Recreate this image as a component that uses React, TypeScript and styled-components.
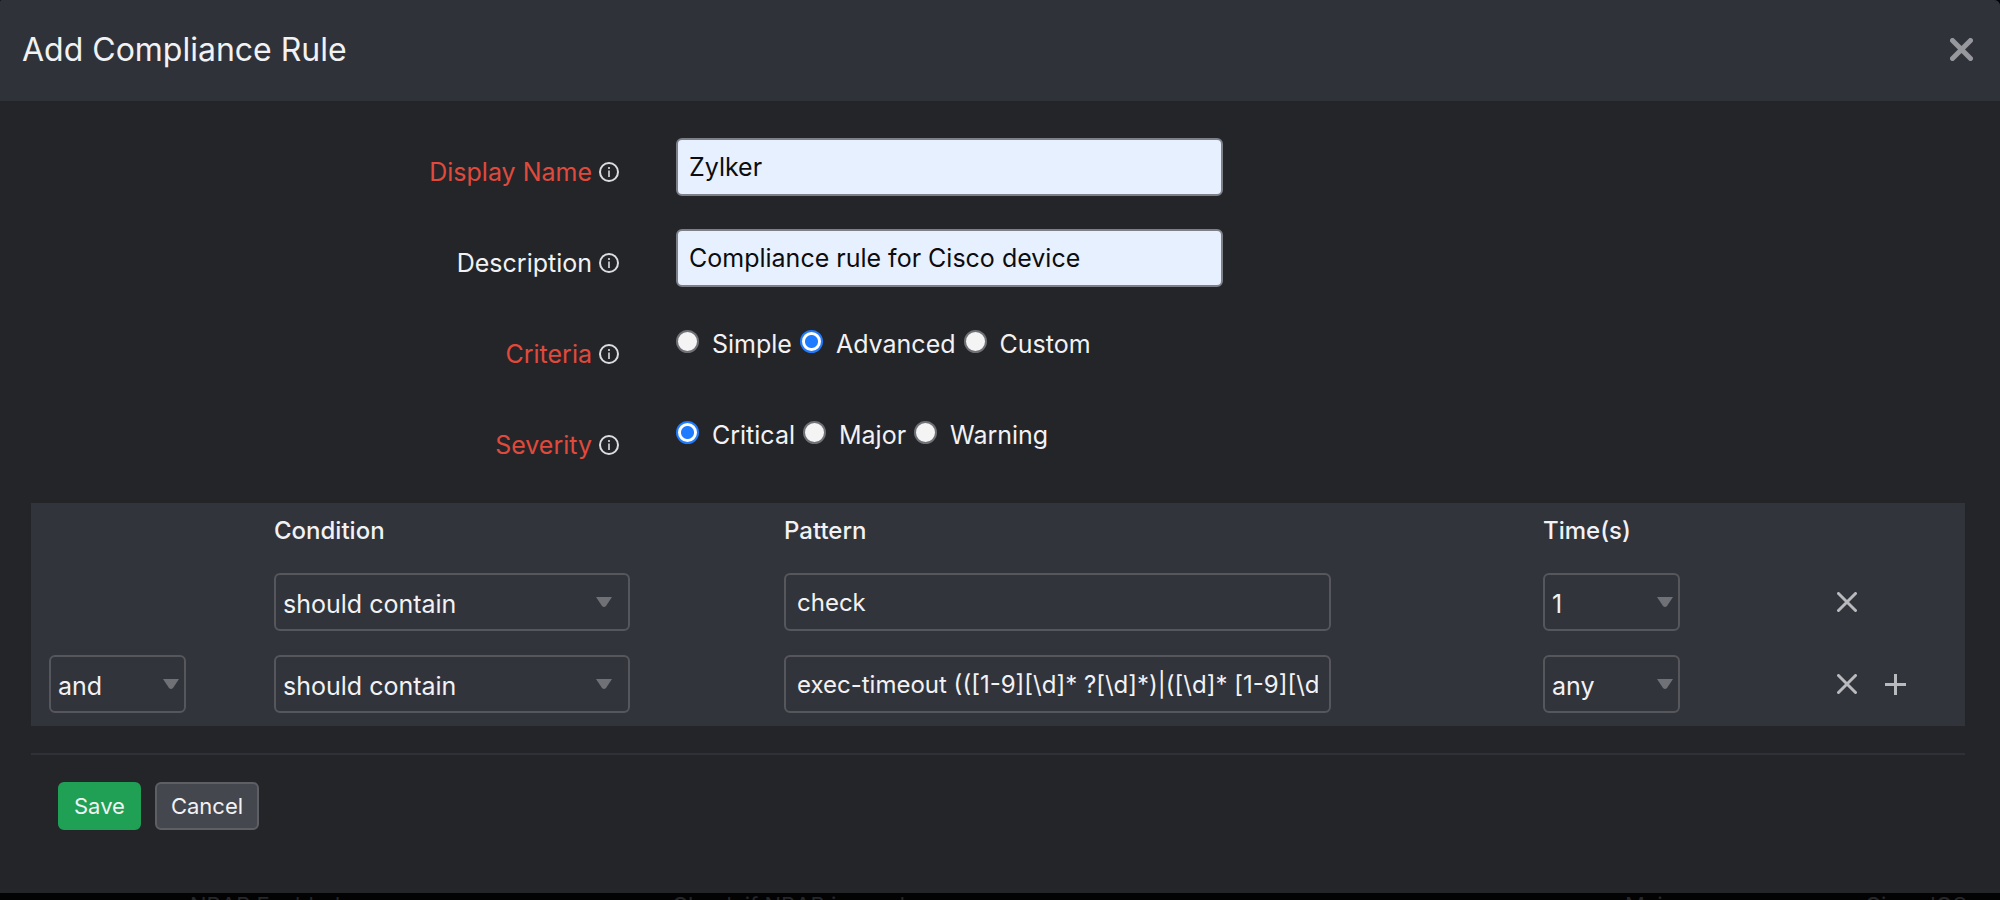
import React from "react";
import styled, { createGlobalStyle } from "styled-components";

const GlobalStyle = createGlobalStyle`
  *, *::before, *::after { box-sizing: border-box; }
  body {
    margin: 0;
    background: #030303;
    color: #f2f2f4;
    font-family: Inter, "Liberation Sans", sans-serif;
    font-size: 25px;
    line-height: 32px;
  }
  input, select, button { font: inherit; color: inherit; margin: 0; }
`;

const Page = styled.div`
  min-height: 100vh;
  display: flex;
  flex-direction: column;
`;

const Dialog = styled.section`
  flex: 1;
  display: flex;
  flex-direction: column;
  background: #242529;
  border-radius: 2px 6px 0 0;
  overflow: hidden;
`;

const Header = styled.header`
  display: flex;
  align-items: center;
  justify-content: space-between;
  height: 101px;
  padding: 0 27px 2px 22px;
  background: #30323a;
`;

const Title = styled.h1`
  margin: 0;
  font-size: 32px;
  line-height: 40px;
  font-weight: 400;
`;

const IconButton = styled.button<{ $tone: string }>`
  display: flex;
  padding: 0;
  border: 0;
  background: none;
  color: ${(p) => p.$tone};
  cursor: pointer;
`;

const Form = styled.form`
  display: flex;
  flex-direction: column;
  padding: 37px 35px 0 31px;
`;

const Fields = styled.div`
  display: flex;
  flex-direction: column;
  gap: 33px;
  margin-bottom: 34px;
`;

const FieldRow = styled.div`
  display: flex;
  align-items: flex-start;
  gap: 57px;
  min-height: 58px;
`;

const FieldName = styled.div<{ $required?: boolean }>`
  display: flex;
  align-items: center;
  justify-content: flex-end;
  gap: 7px;
  flex: 0 0 588px;
  padding-top: 18px;
  color: ${(p) => (p.$required ? "#e04a3c" : "#f2f2f4")};
`;

const TextBox = styled.input<{ $filled?: boolean }>`
  display: block;
  width: 547px;
  max-width: 100%;
  height: 58px;
  padding: 0 11px;
  border: 2px solid ${(p) => (p.$filled ? "#7d8087" : "#55575c")};
  border-radius: 6px;
  background: ${(p) => (p.$filled ? "#e7f0ff" : "transparent")};
  color: ${(p) => (p.$filled ? "#0c0c0e" : "#f2f2f4")};
  font-size: ${(p) => (p.$filled ? 25 : 24)}px;
  outline: none;
`;

const Options = styled.div`
  display: flex;
  gap: 8px;
  padding-top: 8px;
`;

const Option = styled.label`
  display: flex;
  align-items: flex-start;
  gap: 13px;
`;

const Radio = styled.input`
  appearance: none;
  width: 23px;
  height: 23px;
  margin-top: 2px;
  border: 2px solid #6f7176;
  border-radius: 50%;
  background: #f4f4f4;

  &:checked {
    border-color: #1f7bff;
    background: radial-gradient(circle, #1f7bff 6px, #ffffff 7px);
  }
`;

const RulePanel = styled.div`
  padding-bottom: 1px;
  background: #32343c;
`;

const RuleTable = styled.table`
  width: 100%;
  table-layout: fixed;
  border-collapse: collapse;

  th {
    padding: 13px 0 15px 18px;
    font-size: 24px;
    line-height: 30px;
    font-weight: 500;
    text-align: left;
  }
  td { padding: 12px 0 12px 18px; }
`;

const Column = styled.col<{ $width?: number }>`
  width: ${(p) => (p.$width ? `${p.$width}px` : "auto")};
`;

const SelectBox = styled.div<{ $width: number }>`
  position: relative;
  width: ${(p) => p.$width}px;
`;

const SelectInput = styled.select`
  appearance: none;
  display: block;
  width: 100%;
  height: 58px;
  padding: 3px 28px 0 7px;
  border: 2px solid #55575c;
  border-radius: 6px;
  background: #32343c;
  outline: none;
`;

const Caret = styled.svg<{ $inset: number }>`
  position: absolute;
  right: ${(p) => p.$inset}px;
  top: 24px;
  pointer-events: none;
`;

const Actions = styled.div`
  display: flex;
  align-items: center;
  gap: 28px;
`;

const Footer = styled.footer`
  display: flex;
  gap: 14px;
  margin-top: 27px;
  padding: 27px;
  border-top: 2px solid #303138;
`;

const FooterButton = styled.button<{ $primary?: boolean }>`
  height: 48px;
  padding: 0 14px;
  border: 2px solid ${(p) => (p.$primary ? "#1fa055" : "#5d5f65")};
  border-radius: 6px;
  background: ${(p) => (p.$primary ? "#1fa055" : "#45474f")};
  font-size: 22px;
  line-height: 28px;
  cursor: pointer;
`;

const Backdrop = styled.div`
  display: grid;
  grid-template-columns: 482px 953px 240px 1fr;
  height: 7px;
  padding-left: 190px;
  overflow: hidden;
  color: #26272b;
  font-size: 22px;
  line-height: 24px;
  white-space: nowrap;
`;

function InfoIcon() {
  return (
    <svg width="20" height="20" viewBox="0 0 20 20" fill="none" aria-hidden="true">
      <circle cx="10" cy="10" r="9" stroke="#dcdde0" strokeWidth="2" />
      <path d="M10 8.5v6.5M10 5v2" stroke="#dcdde0" strokeWidth="1.6" />
    </svg>
  );
}

function CrossIcon({ size, weight }: { size: number; weight: number }) {
  const a = weight / 2;
  const b = size - a;
  return (
    <svg width={size} height={size} fill="none" aria-hidden="true">
      <path
        d={`M${a} ${a}L${b} ${b}M${b} ${a}L${a} ${b}`}
        stroke="currentColor"
        strokeWidth={weight}
        strokeLinecap="round"
      />
    </svg>
  );
}

function PlusIcon() {
  return (
    <svg width="21" height="21" fill="none" aria-hidden="true">
      <path d="M10.5 0v21M0 10.5h21" stroke="currentColor" strokeWidth="3" />
    </svg>
  );
}

function Select(props: { label: string; value: string; options: string[]; width: number; inset?: number }) {
  return (
    <SelectBox $width={props.width}>
      <SelectInput aria-label={props.label} defaultValue={props.value}>
        {props.options.map((o) => (
          <option key={o}>{o}</option>
        ))}
      </SelectInput>
      <Caret $inset={props.inset ?? 7} width="16" height="10" aria-hidden="true">
        <path d="M0 0h16l-6 9q-2 2-4 0z" fill="#6f7176" />
      </Caret>
    </SelectBox>
  );
}

function TextField(props: { id: string; name: string; value: string; required?: boolean }) {
  return (
    <FieldRow>
      <FieldName $required={props.required}>
        <label htmlFor={props.id}>{props.name}</label>
        <InfoIcon />
      </FieldName>
      <TextBox id={props.id} type="text" defaultValue={props.value} $filled />
    </FieldRow>
  );
}

function RadioField(props: { id: string; name: string; options: string[]; value: string }) {
  return (
    <FieldRow role="radiogroup" aria-labelledby={props.id}>
      <FieldName $required>
        <span id={props.id}>{props.name}</span>
        <InfoIcon />
      </FieldName>
      <Options>
        {props.options.map((o) => (
          <Option key={o}>
            <Radio type="radio" name={props.id} value={o} defaultChecked={o === props.value} />
            {o}
          </Option>
        ))}
      </Options>
    </FieldRow>
  );
}

const rules = [
  { join: "", condition: "should contain", pattern: "check", times: "1" },
  {
    join: "and",
    condition: "should contain",
    pattern: "exec-timeout (([1-9][\\d]* ?[\\d]*)|([\\d]* [1-9][\\d]*))",
    times: "any",
  },
];

export default function App() {
  return (
    <Page>
      <GlobalStyle />
      <Dialog role="dialog" aria-labelledby="dialog-title">
        <Header>
          <Title id="dialog-title">Add Compliance Rule</Title>
          <IconButton type="button" aria-label="Close" $tone="#96989d">
            <CrossIcon size={23} weight={5} />
          </IconButton>
        </Header>
        <Form onSubmit={(e) => e.preventDefault()}>
          <Fields>
            <TextField id="display-name" name="Display Name" value="Zylker" required />
            <TextField id="description" name="Description" value="Compliance rule for Cisco device" />
            <RadioField id="criteria" name="Criteria" options={["Simple", "Advanced", "Custom"]} value="Advanced" />
            <RadioField id="severity" name="Severity" options={["Critical", "Major", "Warning"]} value="Critical" />
          </Fields>
          <RulePanel>
            <RuleTable>
              <colgroup>
                <Column $width={225} />
                <Column $width={510} />
                <Column />
                <Column $width={294} />
                <Column $width={146} />
              </colgroup>
              <thead>
                <tr>
                  <th />
                  <th scope="col">Condition</th>
                  <th scope="col">Pattern</th>
                  <th scope="col">Time(s)</th>
                  <th />
                </tr>
              </thead>
              <tbody>
                {rules.map((rule, i) => (
                  <tr key={i}>
                    <td>
                      {rule.join && (
                        <Select label="Operator" value={rule.join} options={["and", "or"]} width={137} />
                      )}
                    </td>
                    <td>
                      <Select
                        label="Condition"
                        value={rule.condition}
                        options={["should contain", "should not contain"]}
                        width={356}
                        inset={18}
                      />
                    </td>
                    <td>
                      <TextBox type="text" aria-label="Pattern" defaultValue={rule.pattern} />
                    </td>
                    <td>
                      <Select label="Times" value={rule.times} options={["any", "1", "2"]} width={137} />
                    </td>
                    <td>
                      <Actions>
                        <IconButton type="button" aria-label="Remove condition" $tone="#b9babe">
                          <CrossIcon size={20} weight={3} />
                        </IconButton>
                        {i === rules.length - 1 && (
                          <IconButton type="button" aria-label="Add condition" $tone="#b9babe">
                            <PlusIcon />
                          </IconButton>
                        )}
                      </Actions>
                    </td>
                  </tr>
                ))}
              </tbody>
            </RuleTable>
          </RulePanel>
          <Footer>
            <FooterButton type="submit" $primary>
              Save
            </FooterButton>
            <FooterButton type="button">Cancel</FooterButton>
          </Footer>
        </Form>
      </Dialog>
      <Backdrop>
        <span>NBAR Enabled</span>
        <span>Check if NBAR is used</span>
        <span>Major</span>
        <span>Cisco IOS</span>
      </Backdrop>
    </Page>
  );
}
